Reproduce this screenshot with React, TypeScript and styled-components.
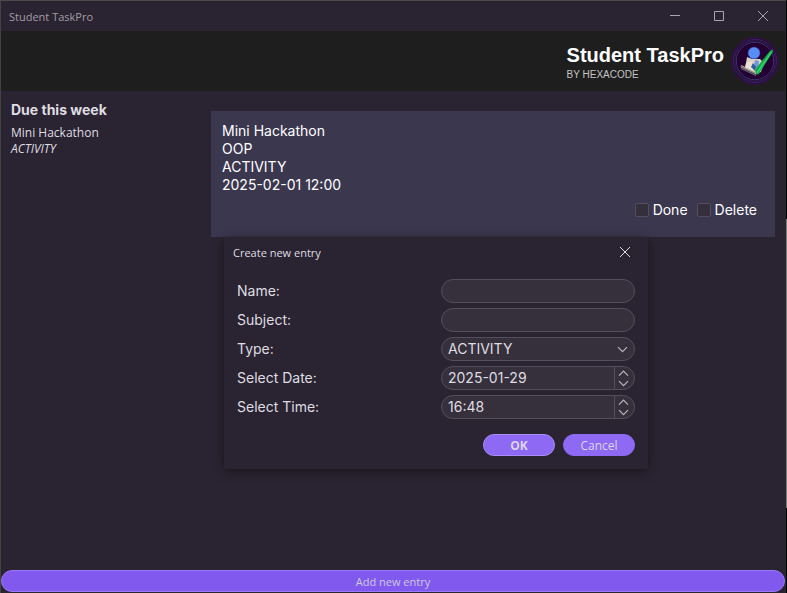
import React, { useState } from "react";
import styled, { createGlobalStyle, css } from "styled-components";

const colors = {
  base: "#2a2331",
  header: "#1e1e1e",
  card: "#3b374f",
  field: "#362f3c",
  fieldBorder: "#544d5b",
  accent: "#8159ef",
  accentLight: "#8d69f4",
  accentBorder: "#9a78f8",
  text: "#dfdde1",
};

const uiFont = `"Open Sans", "Noto Sans", sans-serif`;
const bodyFont = `Inter, "Liberation Sans", sans-serif`;

const GlobalStyle = createGlobalStyle`
  *, *::before, *::after { box-sizing: border-box; }
  body {
    margin: 0;
    background: #000;
    color: ${colors.text};
    font: 14px/18px ${bodyFont};
  }
  button, input, select { font: inherit; color: inherit; }
`;

const Desktop = styled.div`
  min-height: 100vh;
  display: flex;
  padding-right: 1px;
  background: linear-gradient(#000 219px, #7c7b72 219px, #7c7b72 508px, #000 508px);
`;

const Window = styled.div`
  position: relative;
  flex: 1;
  display: flex;
  flex-direction: column;
  padding: 0 1px 1px 0;
  border-top: 1px solid #4a4a4a;
  border-left: 1px solid #434343;
  background: ${colors.base};
`;

const TitleBar = styled.div`
  height: 30px;
  display: flex;
  align-items: center;
  justify-content: space-between;
  padding-left: 8px;
  font: 11px/16px ${uiFont};
  color: #a19da5;
`;

const BarText = styled.span`
  padding-top: 2px;
`;

const WindowControls = styled.div`
  display: flex;
`;

const IconButton = styled.button<{ $width: number }>`
  width: ${(p) => p.$width}px;
  height: 30px;
  display: flex;
  align-items: center;
  justify-content: center;
  padding: 0;
  border: 0;
  background: none;
`;

const Header = styled.header`
  height: 60px;
  display: flex;
  align-items: center;
  justify-content: flex-end;
  gap: 7px;
  padding-right: 6px;
  background: ${colors.header};
`;

const Brand = styled.div`
  padding-top: 3px;
  font-family: "Liberation Sans", Arial, sans-serif;
`;

const BrandName = styled.h1`
  margin: 0 0 1px;
  font-size: 20px;
  line-height: 24px;
  font-weight: bold;
  color: #fff;
`;

const BrandBy = styled.div`
  font-size: 10px;
  line-height: 14px;
  color: #c4c4c4;
`;

const Content = styled.div`
  flex: 1;
  display: grid;
  grid-template-columns: 190px 1fr;
  gap: 10px;
  padding: 10px;
`;

const Sidebar = styled.aside``;

const SidebarTitle = styled.h2`
  margin: 0 0 7px;
  font-size: 14px;
  line-height: 17px;
  font-weight: bold;
`;

const DueItem = styled.div`
  font: 12px/16px ${uiFont};
`;

const DueKind = styled.em`
  display: block;
`;

const Entries = styled.main`
  padding-top: 10px;
`;

const Card = styled.article`
  height: 126px;
  padding: 11px;
  background: ${colors.card};
  color: #fff;
`;

const CardActions = styled.div`
  display: flex;
  justify-content: flex-end;
  gap: 9px;
  padding: 7px;
`;

const CheckLabel = styled.label`
  display: flex;
  align-items: center;
  gap: 4px;
`;

const Checkbox = styled.input`
  appearance: none;
  width: 14px;
  height: 14px;
  margin: 0;
  border: 1px solid #544e5a;
  border-radius: 2px;
  background: #352f3c;
  &:checked { background: ${colors.accentLight}; }
`;

const AddButton = styled.button`
  height: 22px;
  padding: 2px 0 0;
  border: 1px solid ${colors.accentBorder};
  border-radius: 11px;
  background: ${colors.accent};
  font: 11px/16px ${uiFont};
  color: #cfc9dc;
`;

const Dialog = styled.div`
  position: absolute;
  top: 236px;
  left: 223px;
  width: 424px;
  background: ${colors.base};
  box-shadow: 0 2px 10px rgba(0, 0, 0, 0.4), 0 0 1px rgba(40, 40, 30, 0.9);
`;

const DialogBar = styled.div`
  height: 30px;
  display: flex;
  align-items: center;
  justify-content: space-between;
  padding-left: 9px;
  font: 11px/16px ${uiFont};
`;

const Form = styled.form`
  display: flex;
  flex-direction: column;
  gap: 5px;
  padding: 12px 13px 13px;
`;

const FormRow = styled.div`
  display: grid;
  grid-template-columns: 1fr 194px;
  align-items: center;
`;

const fieldBox = css`
  width: 100%;
  height: 24px;
  border: 1px solid ${colors.fieldBorder};
  border-radius: 12px;
  background: ${colors.field};
  outline: none;
`;

const TextField = styled.input`
  ${fieldBox}
  padding: 0 6px;
`;

const SelectWrap = styled.div`
  ${fieldBox}
  display: grid;
  align-items: center;
  > * { grid-area: 1 / 1; }
  > svg { justify-self: end; margin-right: 6px; pointer-events: none; }
`;

const Select = styled.select`
  appearance: none;
  width: 100%;
  height: 22px;
  padding: 0 6px;
  border: 0;
  outline: none;
  background: transparent;
`;

const SpinBox = styled.div`
  ${fieldBox}
  display: flex;
  overflow: hidden;
`;

const SpinInput = styled.input`
  flex: 1;
  min-width: 0;
  padding: 0 6px;
  border: 0;
  outline: none;
  background: transparent;
`;

const SpinButtons = styled.div`
  width: 20px;
  display: flex;
  flex-direction: column;
  padding: 1px 0;
  border-left: 1px solid ${colors.fieldBorder};
`;

const SpinButton = styled.button`
  flex: 1;
  display: flex;
  align-items: center;
  padding: 0 0 0 3px;
  border: 0;
  background: none;
`;

const DialogActions = styled.div`
  display: flex;
  justify-content: flex-end;
  gap: 8px;
  padding-top: 10px;
`;

const PillButton = styled.button<{ $primary?: boolean }>`
  width: 72px;
  height: 22px;
  padding: 2px 0 0;
  border: 1px solid ${(p) => (p.$primary ? "#a88cf8" : colors.accentLight)};
  border-radius: 11px;
  background: ${colors.accentLight};
  font: ${(p) => (p.$primary ? "bold" : "normal")} 12px/16px ${uiFont};
  color: #dbd5e8;
`;

const Cross = ({ color }: { color: string }) => (
  <svg width="12" height="12" viewBox="0 0 12 12" stroke={color} fill="none">
    <path d="M1 1L11 11M11 1L1 11" />
  </svg>
);

const Chevron = ({ up = false }: { up?: boolean }) => (
  <svg width="11" height="7" viewBox="0 0 11 7" stroke="#b9b5bd" strokeWidth="1.2" fill="none">
    <path d={up ? "M1 5.7L5.5 1.2L10 5.7" : "M1 1.2L5.5 5.7L10 1.2"} />
  </svg>
);

const Logo = () => (
  <svg width="48" height="50" viewBox="0 0 48 50" role="img" aria-label="Student TaskPro logo">
    <circle cx="24" cy="25" r="23.5" fill="#1d0b28" />
    <g fill="none" strokeWidth="0.9">
      <circle cx="24" cy="25" r="23.3" stroke="#421158" />
      <circle cx="24" cy="25" r="21.6" stroke="#3d2470" />
      <circle cx="24" cy="25" r="20.2" stroke="#35205a" />
      <circle cx="24" cy="25" r="18.7" stroke="#44357c" />
    </g>
    <circle cx="24" cy="25" r="18" fill="#250032" />
    <path d="M16 21L21 23L29 23L33 27L30 36L25 38L14 33Z" fill="#d9d2cd" />
    <path d="M15 27L20 25L24 30L23 36L14 32Z" fill="#eee3d0" />
    <path d="M24 24L28 25L27 34L23 30Z" fill="#7396d8" />
    <path d="M22 27L25 31L24 35L20 31Z" fill="#315ca1" />
    <path d="M9.500 30L25 36.500L25 40L10 33Z" fill="#8c8582" />
    <path d="M10 29.500L24 36L25 39" fill="none" stroke="#cdbfae" strokeWidth="1" />
    <path d="M10 32L25 39" stroke="#343d61" strokeWidth="1" />
    <circle cx="23" cy="17" r="5.800" fill="#5a8cf6" stroke="#416fe0" strokeWidth="0.600" />
    <path d="M41.500 13.500L42 15.500L27.500 38.500L24.800 38L24 33.500L38.500 15.500Z" fill="#17a748" />
    <path d="M40.500 16L26 37" stroke="#2fd56a" strokeWidth="1.500" />
  </svg>
);

function Spinner({ id, label, initial }: { id: string; label: string; initial: string }) {
  const [value, setValue] = useState(initial);
  const step = (amount: number) =>
    setValue((v) => v.replace(/\d+$/, (n) => String(Math.max(0, Number(n) + amount)).padStart(2, "0")));
  return (
    <SpinBox>
      <SpinInput id={id} value={value} onChange={(e) => setValue(e.target.value)} />
      <SpinButtons>
        <SpinButton type="button" aria-label={`${label} up`} onClick={() => step(1)}>
          <Chevron up />
        </SpinButton>
        <SpinButton type="button" aria-label={`${label} down`} onClick={() => step(-1)}>
          <Chevron />
        </SpinButton>
      </SpinButtons>
    </SpinBox>
  );
}

function EntryDialog({ onClose }: { onClose: () => void }) {
  return (
    <Dialog role="dialog" aria-labelledby="dialog-title">
      <DialogBar>
        <BarText id="dialog-title">Create new entry</BarText>
        <IconButton $width={46} aria-label="Close dialog" onClick={onClose}>
          <Cross color="#dedce0" />
        </IconButton>
      </DialogBar>
      <Form onSubmit={(e) => { e.preventDefault(); onClose(); }}>
        <FormRow>
          <label htmlFor="name">Name:</label>
          <TextField id="name" />
        </FormRow>
        <FormRow>
          <label htmlFor="subject">Subject:</label>
          <TextField id="subject" />
        </FormRow>
        <FormRow>
          <label htmlFor="type">Type:</label>
          <SelectWrap>
            <Select id="type">
              <option>ACTIVITY</option>
            </Select>
            <Chevron />
          </SelectWrap>
        </FormRow>
        <FormRow>
          <label htmlFor="date">Select Date:</label>
          <Spinner id="date" label="Date" initial="2025-01-29" />
        </FormRow>
        <FormRow>
          <label htmlFor="time">Select Time:</label>
          <Spinner id="time" label="Time" initial="16:48" />
        </FormRow>
        <DialogActions>
          <PillButton type="submit" $primary>OK</PillButton>
          <PillButton type="button" onClick={onClose}>Cancel</PillButton>
        </DialogActions>
      </Form>
    </Dialog>
  );
}

export default function App() {
  const [open, setOpen] = useState(true);
  return (
    <>
      <GlobalStyle />
      <Desktop>
        <Window>
          <TitleBar>
            <BarText>Student TaskPro</BarText>
            <WindowControls>
              <IconButton $width={44} aria-label="Minimize">
                <svg width="10" height="10" viewBox="0 0 10 10" stroke="#a8a4ab"><path d="M0 4.500H10" /></svg>
              </IconButton>
              <IconButton $width={44} aria-label="Maximize">
                <svg width="10" height="10" viewBox="0 0 10 10" stroke="#a8a4ab" fill="none"><path d="M.5 .5H9.500V9.500H.5Z" /></svg>
              </IconButton>
              <IconButton $width={44} aria-label="Close">
                <Cross color="#a8a4ab" />
              </IconButton>
            </WindowControls>
          </TitleBar>
          <Header>
            <Brand>
              <BrandName>Student TaskPro</BrandName>
              <BrandBy>BY HEXACODE</BrandBy>
            </Brand>
            <Logo />
          </Header>
          <Content>
            <Sidebar>
              <SidebarTitle>Due this week</SidebarTitle>
              <DueItem>
                Mini Hackathon
                <DueKind>ACTIVITY</DueKind>
              </DueItem>
            </Sidebar>
            <Entries>
              <Card>
                <div>Mini Hackathon</div>
                <div>OOP</div>
                <div>ACTIVITY</div>
                <div>2025-02-01 12:00</div>
                <CardActions>
                  <CheckLabel><Checkbox type="checkbox" />Done</CheckLabel>
                  <CheckLabel><Checkbox type="checkbox" />Delete</CheckLabel>
                </CardActions>
              </Card>
            </Entries>
          </Content>
          <AddButton onClick={() => setOpen(true)}>Add new entry</AddButton>
          {open && <EntryDialog onClose={() => setOpen(false)} />}
        </Window>
      </Desktop>
    </>
  );
}
